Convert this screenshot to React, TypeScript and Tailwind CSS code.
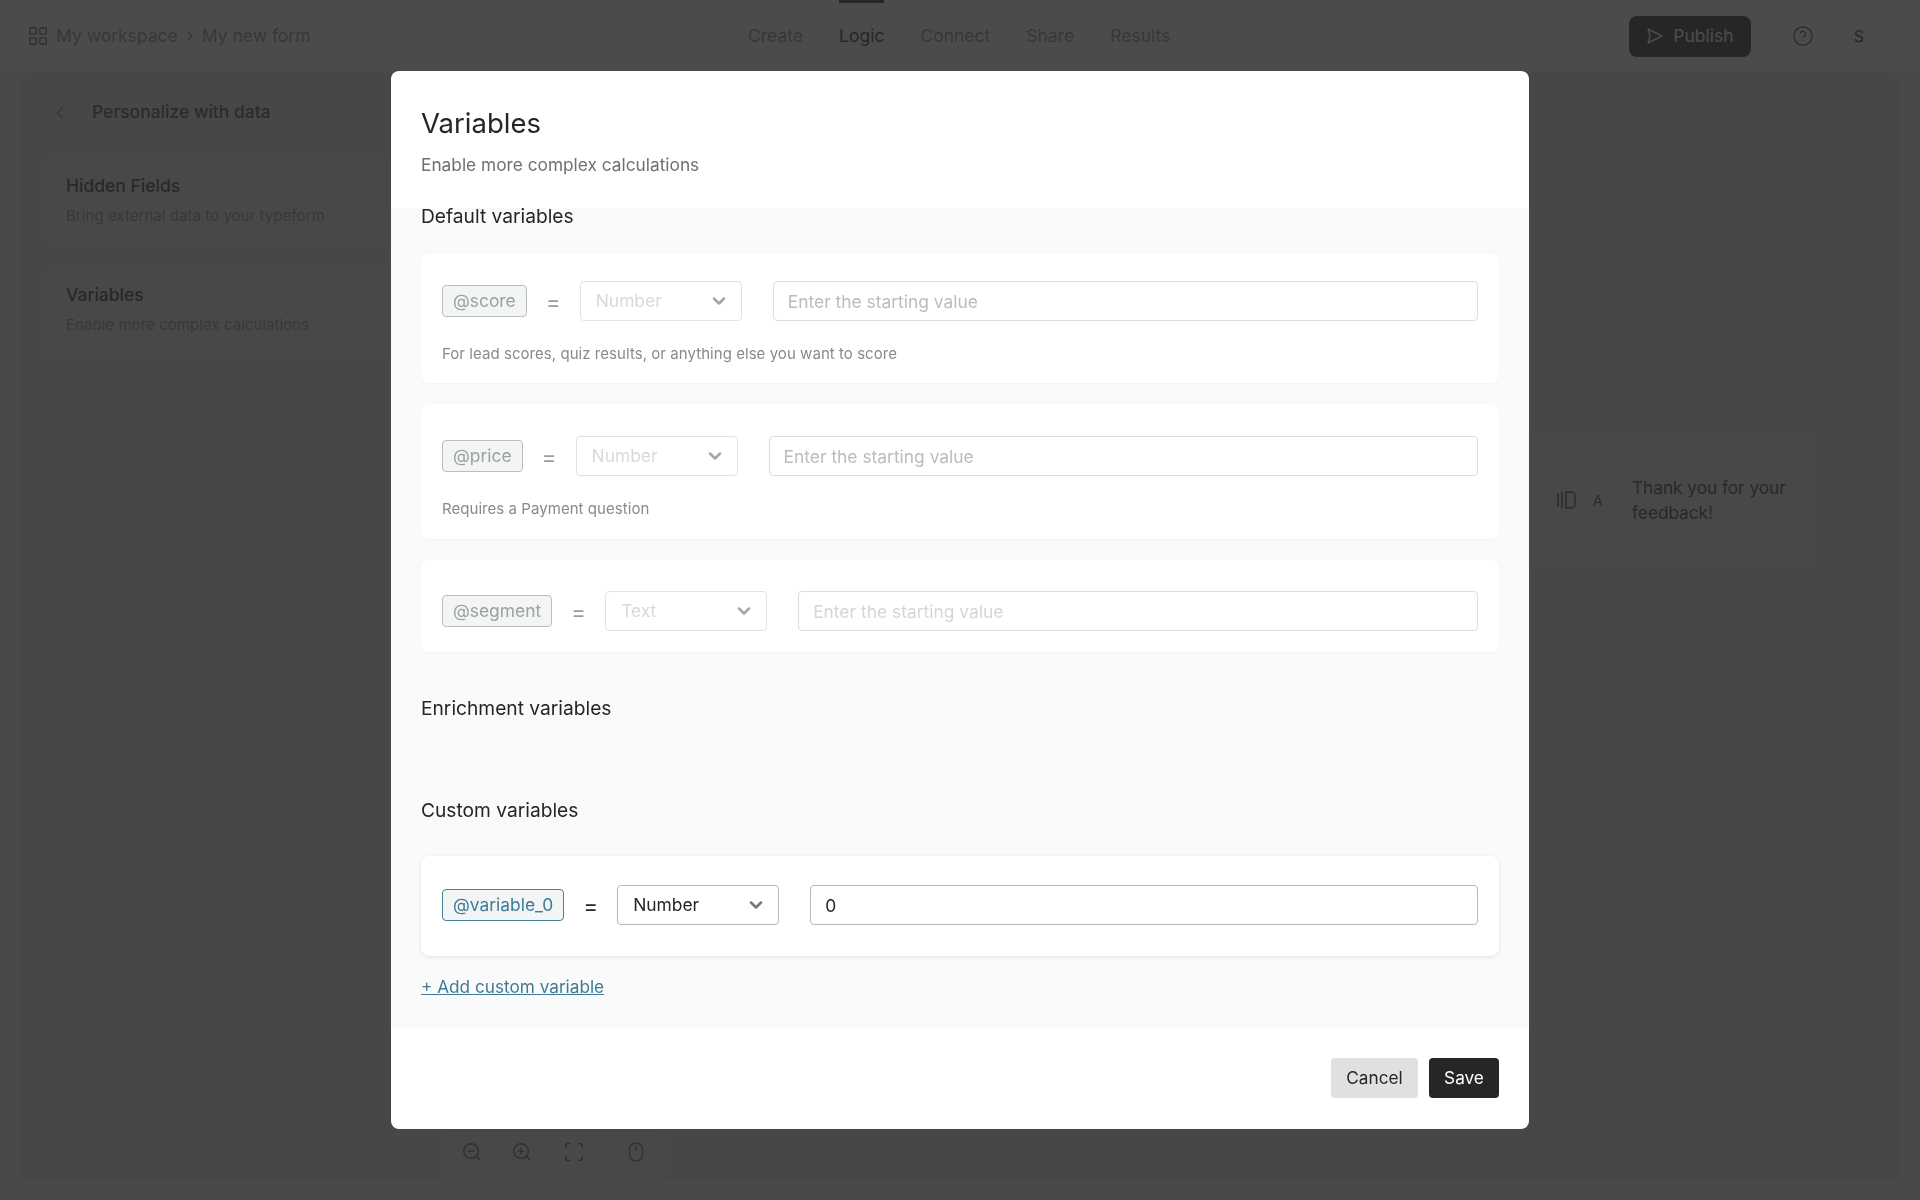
import { ChevronDown, ChevronLeft, ChevronRight, CircleHelp, LayoutGrid, Mouse, Scan, ZoomIn, ZoomOut } from "lucide-react"

function VariableRow({ tag, type, value, active, faint }: { tag: string; type: string; value?: string; active?: boolean; faint?: boolean }) {
  return (
    <div className="flex items-center h-10">
      <span
        className={`h-8 px-[10px] pt-px flex items-center rounded-[4px] border text-[17.4px] ${
          active ? "bg-[#f2f5f6] border-[#4a8199] text-[#3f7b96]" : "bg-[#f3f4f4] border-[#b9bdbe] text-[#9da1a3]"
        }`}
      >
        {tag}
      </span>
      <span className={`w-[53px] text-center text-[22px] pt-[2px] ${active ? "text-[#262627]" : "text-[#9a9a9a]"}`}>=</span>
      <div
        className={`w-[162px] h-10 shrink-0 bg-white rounded-[4px] border pl-[15px] pr-[12px] pt-px flex items-center justify-between text-[17.4px] ${
          active ? "border-[#b8b8b8] text-[#262627]" : "border-[#e2e2e2] text-[#d9d9d9]"
        }`}
      >
        {type}
        <ChevronDown className={`w-5 h-5 -mt-[2px] ${active ? "text-[#777]" : "text-[#a5a5a5]"}`} strokeWidth={3} />
      </div>
      <input
        readOnly
        value={value}
        placeholder="Enter the starting value"
        className={`ml-[31px] flex-1 min-w-0 h-10 px-[14px] bg-white rounded-[4px] border text-[17.4px] outline-none ${
          faint ? "placeholder:text-[#d6d6d6]" : "placeholder:text-[#bcbcbc]"
        } ${active ? "border-[#b8b8b8] text-[#262627]" : "border-[#dedede]"}`}
      />
    </div>
  )
}

export default function App() {
  return (
    <div className="relative w-full h-screen overflow-hidden bg-[#f2f2f2] text-[#262627] font-['Inter',sans-serif]">
      {/* Top bar */}
      <header className="relative h-[72px] bg-white flex items-center justify-between pl-[27px] pr-[43px] text-[17.5px]">
        <div className="flex items-center text-[#8a8a8a]">
          <LayoutGrid className="w-[22px] h-[22px] text-[#555]" strokeWidth={1.5} />
          <span className="ml-[7px]">My workspace</span>
          <ChevronRight className="w-4 h-4 mx-[4px]" />
          <span>My new form</span>
        </div>
        <nav className="absolute left-[748px] top-0 h-full flex items-center gap-[36px] text-[#8a8a8a]">
          <span>Create</span>
          <span className="relative text-[#262627]">
            Logic
            <span className="absolute left-0 right-0 top-[-23px] h-[3px] bg-[#262627]"></span>
          </span>
          <span>Connect</span>
          <span>Share</span>
          <span>Results</span>
        </nav>
        <div className="flex items-center">
          <button className="w-[122px] h-[41px] rounded-[8px] bg-[#262627] text-white flex items-center justify-center gap-[9px]">
            <svg width="18" height="18" viewBox="0 0 18 18" fill="none" stroke="currentColor" strokeWidth="1.4" strokeLinejoin="round">
              <path d="M2 2l14 7-14 7 2-7z" />
            </svg>
            Publish
          </button>
          <CircleHelp className="ml-[41px] w-[22px] h-[22px] text-[#333]" strokeWidth={1.25} />
          <span className="ml-[27px] w-[36px] h-[36px] rounded-full bg-[#f5f5f5] flex items-center justify-center text-[16px]">S</span>
        </div>
      </header>

      {/* Page behind the dialog */}
      <main className="flex h-[1108px] mx-[20px] rounded-lg bg-[#e4e4e4]">
        <aside className="w-[400px] h-full px-[27px]">
          <div className="flex items-center h-[80px] pt-px text-[17.5px] font-medium text-[#444]">
            <ChevronLeft className="w-5 h-5 ml-[3px] mr-[22px] text-[#777]" strokeWidth={1.5} />
            Personalize with data
          </div>
          <div className="h-[88px] mt-[3px] bg-[#eeeeee] rounded-lg px-[19px] pt-[18px]">
            <div className="text-[17.5px] font-medium text-[#333]">Hidden Fields</div>
            <div className="mt-[6px] text-[15px] tracking-[0.05px] text-[#8f8f8f]">Bring external data to your typeform</div>
          </div>
          <div className="h-[91px] mt-[24px] bg-[#eeeeee] rounded-lg px-[19px] pt-[15px]">
            <div className="text-[17.5px] font-medium text-[#333]">Variables</div>
            <div className="mt-[6px] text-[15px] tracking-[0.05px] text-[#8f8f8f]">Enable more complex calculations</div>
          </div>
        </aside>
        <section className="relative flex-1 h-full">
          <div className="absolute right-[88px] top-[361px] w-[400px] h-[134px] rounded-lg bg-[#eaeaea] flex items-center justify-end pr-[15px]">
            <svg width="20" height="18" viewBox="0 0 20 18" fill="none" stroke="#333" strokeWidth="1.4" className="mr-[16px]">
              <path d="M1 2v14M5 1v16M9 1h5a4 4 0 0 1 4 4v8a4 4 0 0 1-4 4H9z" />
            </svg>
            <span className="w-[14px] text-[14px] text-[#333] mr-[25px]">A</span>
            <span className="w-[165px] text-[17.2px] leading-[25px] text-[#333]">Thank you for your feedback!</span>
          </div>
          <div className="absolute left-[20px] bottom-0 w-[226px] h-[47px] pb-[9px] rounded-lg bg-[#eaeaea] flex items-center text-[#555]">
            <ZoomOut className="ml-[21px] w-[22px] h-[22px]" strokeWidth={1.5} />
            <ZoomIn className="ml-[28px] w-[22px] h-[22px]" strokeWidth={1.5} />
            <Scan className="ml-[30px] w-[22px] h-[22px]" strokeWidth={1.5} />
            <Mouse className="ml-[40px] w-[22px] h-[22px]" strokeWidth={1.5} />
          </div>
        </section>
      </main>

      {/* Dialog */}
      <div className="fixed inset-0 bg-[rgba(38,38,39,0.83)] flex justify-center items-start pt-[71px]">
        <div className="w-[1138px] h-[1058px] bg-white rounded-lg flex flex-col overflow-hidden">
          <div className="h-[137px] shrink-0 px-[30px] pt-[32px]">
            <h2 className="text-[27.5px] leading-[40px] text-[#262627]">Variables</h2>
            <p className="mt-[9px] text-[17.3px] leading-[26px] text-[#6f6f6f]">Enable more complex calculations</p>
          </div>

          <div className="h-[820px] shrink-0 bg-[#fafafa] px-[30px]">
            <h3 className="-mt-[4px] text-[19.2px] leading-6 text-[#262627]">Default variables</h3>

            <div className="mt-[26px] bg-white rounded-lg px-[21px] pt-[27px] pb-[19px] shadow-[0_1px_3px_rgba(0,0,0,0.03)]">
              <VariableRow tag="@score" type="Number" />
              <p className="mt-[23px] text-[15px] leading-5 tracking-[0.05px] text-[#8a8a8a]">For lead scores, quiz results, or anything else you want to score</p>
            </div>
            <div className="mt-[21px] bg-white rounded-lg px-[21px] pt-[32px] pb-[20px] shadow-[0_1px_3px_rgba(0,0,0,0.03)]">
              <VariableRow tag="@price" type="Number" />
              <p className="mt-[23px] text-[15px] leading-5 tracking-[0.05px] text-[#8a8a8a]">Requires a Payment question</p>
            </div>
            <div className="mt-[21px] bg-white rounded-lg px-[21px] pt-[31px] pb-[21px] shadow-[0_1px_3px_rgba(0,0,0,0.03)]">
              <VariableRow tag="@segment" type="Text" faint />
            </div>

            <h3 className="mt-[44px] text-[19.2px] leading-6 text-[#262627]">Enrichment variables</h3>
            <h3 className="mt-[78px] text-[19.2px] leading-6 text-[#262627]">Custom variables</h3>

            <div className="mt-[34px] bg-white rounded-lg px-[21px] pt-[29px] pb-[31px] shadow-[0_1px_4px_rgba(0,0,0,0.1)]">
              <VariableRow tag="@variable_0" type="Number" value="0" active />
            </div>
            <a className="block mt-[19px] text-[17.2px] leading-6 underline text-[#3f7b96]">+ Add custom variable</a>
          </div>

          <div className="flex-1 flex justify-end gap-[11px] pt-[30px] pr-[30px] text-[17.2px]">
            <button className="w-[87px] h-10 rounded-[4px] bg-[#dfe0e1] text-[#262627]">Cancel</button>
            <button className="w-[70px] h-10 rounded-[4px] bg-[#262627] text-white">Save</button>
          </div>
        </div>
      </div>
    </div>
  )
}
